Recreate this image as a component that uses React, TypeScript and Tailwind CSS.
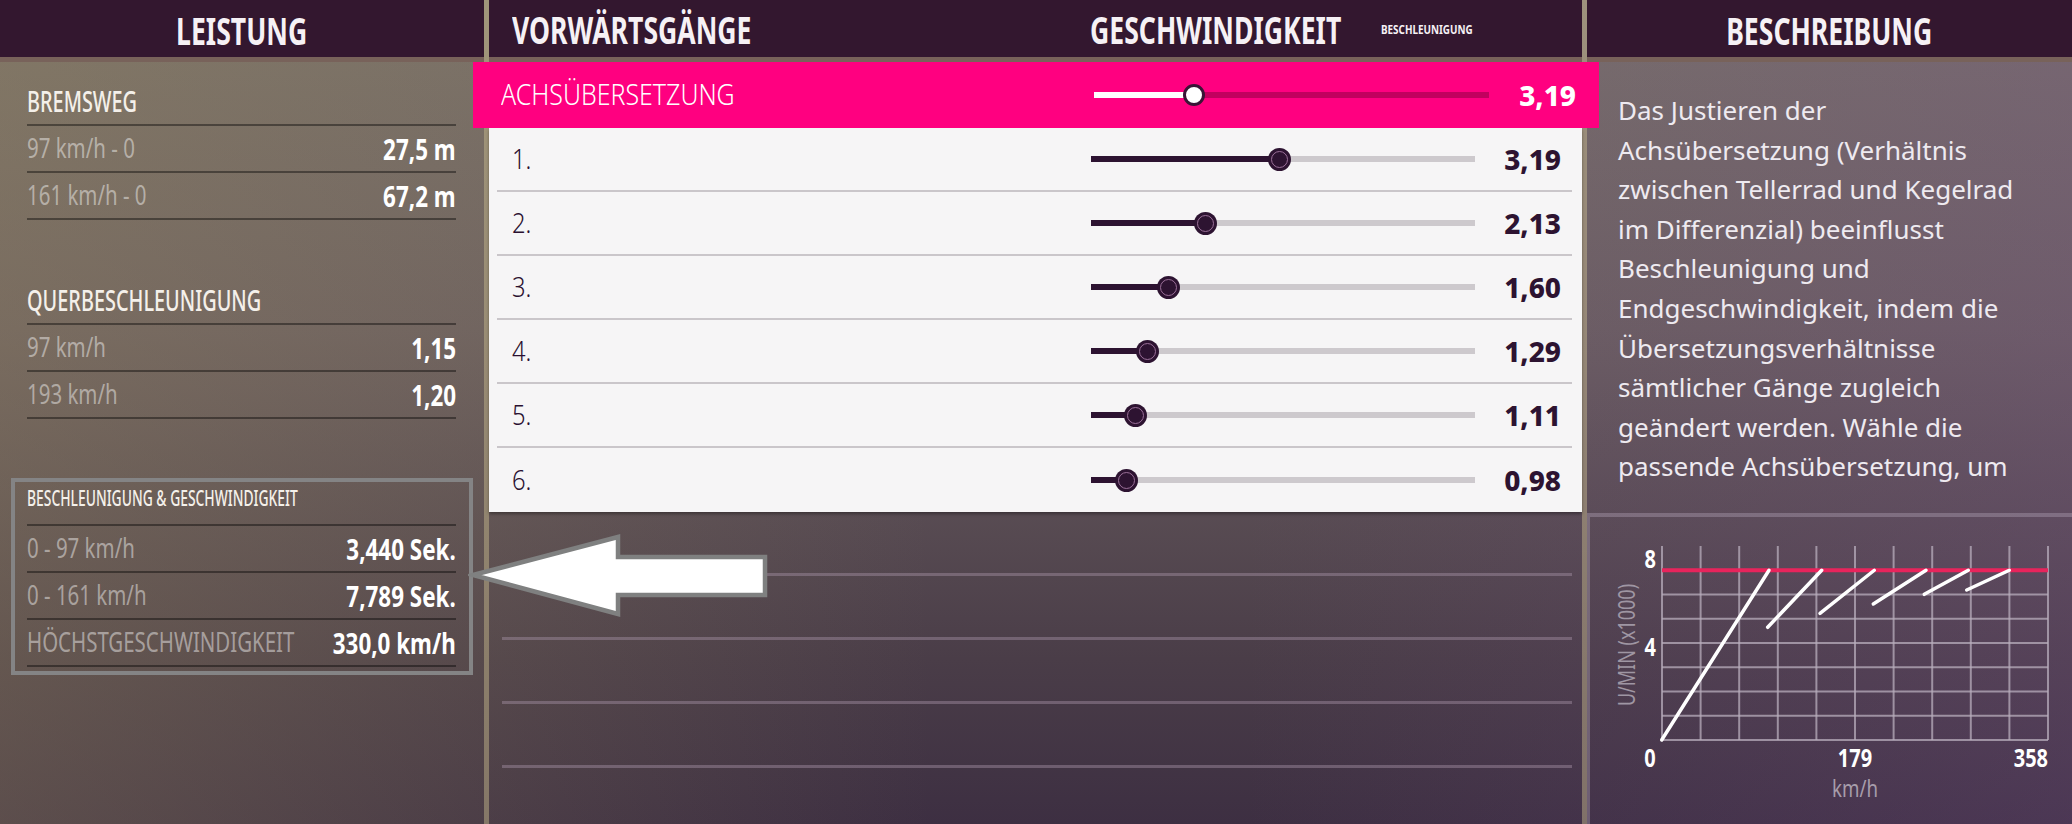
import React from "react";

const cond = "font-['Noto_Sans','Open_Sans',sans-serif]";
const body = "font-['Noto_Sans','Open_Sans',sans-serif]";
const edge = "border-[rgba(205,190,145,0.45)]";

const gears = [
  { n: "1.", v: "3,19", p: 49 },
  { n: "2.", v: "2,13", p: 29.7 },
  { n: "3.", v: "1,60", p: 20 },
  { n: "4.", v: "1,29", p: 14.6 },
  { n: "5.", v: "1,11", p: 11.5 },
  { n: "6.", v: "0,98", p: 9.1 },
];

const description = [
  "Das Justieren der",
  "Achsübersetzung (Verhältnis",
  "zwischen Tellerrad und Kegelrad",
  "im Differenzial) beeinflusst",
  "Beschleunigung und",
  "Endgeschwindigkeit, indem die",
  "Übersetzungsverhältnisse",
  "sämtlicher Gänge zugleich",
  "geändert werden. Wähle die",
  "passende Achsübersetzung, um",
];

function PanelHeader({ children, className = "" }: { children: React.ReactNode; className?: string }) {
  return (
    <div className={`flex h-[62px] shrink-0 items-center border-b-[5px] bg-[#33172f] ${edge} ${className}`}>
      {children}
    </div>
  );
}

function HeaderTitle({ children, align = "origin-center" }: { children: React.ReactNode; align?: string }) {
  return (
    <span
      className={`${cond} ${align} inline-block scale-x-[0.7] whitespace-nowrap pt-[2px] text-[38px] font-bold leading-none text-[#f6f1f5]`}
    >
      {children}
    </span>
  );
}

function StatRow({ label, value }: { label: string; value: string }) {
  return (
    <div className="flex h-[47px] items-center border-b-2 border-black/40">
      <div className="min-w-0 flex-1">
        <span className={`${cond} inline-block origin-left scale-x-[0.73] whitespace-nowrap text-[28px] leading-none text-white/45`}>
          {label}
        </span>
      </div>
      <span
        className={`${cond} inline-block shrink-0 origin-right scale-x-[0.8] whitespace-nowrap text-[28px] font-bold leading-none text-white`}
      >
        {value}
      </span>
    </div>
  );
}

function SectionTitle({ children, h }: { children: React.ReactNode; h: string }) {
  return (
    <div className={`flex ${h} items-end border-b-2 border-black/40 pb-[9px]`}>
      <span className={`${cond} inline-block origin-left scale-x-[0.71] whitespace-nowrap text-[28px] font-medium leading-none text-[#f4f0ea]`}>
        {children}
      </span>
    </div>
  );
}

function LeftPanel() {
  return (
    <div className={`flex w-[489px] shrink-0 flex-col border-r-[5px] ${edge}`}>
      <PanelHeader className="justify-center">
        <HeaderTitle>LEISTUNG</HeaderTitle>
      </PanelHeader>
      <div className="flex flex-col pl-[27px] pr-[28px]">
        <SectionTitle h="h-[64px]">BREMSWEG</SectionTitle>
        <StatRow label="97 km/h - 0" value="27,5 m" />
        <StatRow label="161 km/h - 0" value="67,2 m" />

        <SectionTitle h="h-[105px]">QUERBESCHLEUNIGUNG</SectionTitle>
        <StatRow label="97 km/h" value="1,15" />
        <StatRow label="193 km/h" value="1,20" />

        <div className="-ml-[16px] -mr-[17px] mt-[59px] border-4 border-[#848485] pb-[4px] pl-[12px] pr-[13px]">
          <div className="flex h-[44px] items-end border-b-2 border-black/40 pb-[15px]">
            <span
              className={`${cond} inline-block origin-left scale-x-[0.66] whitespace-nowrap text-[21px] font-medium leading-none text-[#f4f0ea]`}
            >
              BESCHLEUNIGUNG &amp; GESCHWINDIGKEIT
            </span>
          </div>
          <StatRow label="0 - 97 km/h" value="3,440 Sek." />
          <StatRow label="0 - 161 km/h" value="7,789 Sek." />
          <StatRow label="HÖCHSTGESCHWINDIGKEIT" value="330,0 km/h" />
        </div>
      </div>
    </div>
  );
}

function Slider({ p, light }: { p: number; light?: boolean }) {
  return (
    <div className="flex h-[24px] w-full items-center">
      <div className={`h-[6px] ${light ? "bg-white" : "bg-[#2d1331]"}`} style={{ width: `${p}%` }} />
      <div
        className={
          light
            ? "relative z-10 -mx-[11px] h-[22px] w-[22px] shrink-0 rounded-full border-[3px] border-[#3a1536] bg-white"
            : "relative z-10 -mx-[11px] flex h-[23px] w-[23px] shrink-0 items-center justify-center rounded-full bg-[#2d1331]"
        }
      >
        {!light && <div className="h-[17px] w-[17px] rounded-full border border-[#9a6f98]" />}
      </div>
      <div className={`h-[6px] flex-1 ${light ? "bg-[#c2005f]" : "bg-[#cdc9cd]"}`} />
    </div>
  );
}

function MiddlePanel() {
  return (
    <div className={`flex w-[1098px] shrink-0 flex-col border-r-[5px] ${edge}`}>
      <PanelHeader className="pl-[23px]">
        <div className="min-w-0 flex-1">
          <HeaderTitle align="origin-left">VORWÄRTSGÄNGE</HeaderTitle>
        </div>
        <div className="flex w-[492px] shrink-0 items-center">
          <div className="w-[291px] shrink-0">
            <HeaderTitle align="origin-left">GESCHWINDIGKEIT</HeaderTitle>
          </div>
          <span
            className={`${cond} inline-block origin-left scale-x-[0.76] whitespace-nowrap pt-[2px] text-[13px] font-bold leading-none text-[#f6f1f5]`}
          >
            BESCHLEUNIGUNG
          </span>
        </div>
      </PanelHeader>

      <div className="relative z-10 -ml-[16px] -mr-[17px] flex h-[66px] shrink-0 items-center bg-[#ff0080] pl-[28px] pr-[23px]">
        <div className="min-w-0 flex-1">
          <span className={`${cond} inline-block origin-left scale-x-[0.86] whitespace-nowrap text-[29px] font-light leading-none text-white`}>
            ACHSÜBERSETZUNG
          </span>
        </div>
        <div className="w-[395px] shrink-0">
          <Slider p={25.4} light />
        </div>
        <span className={`${body} w-[87px] shrink-0 text-right text-[28px] font-extrabold leading-none text-white`}>3,19</span>
      </div>

      <div className="bg-[#f6f5f6] shadow-[0_2px_3px_rgba(0,0,0,0.35)]">
        {gears.map((g, i) => (
          <div
            key={g.n}
            className={`ml-[8px] mr-[10px] flex h-[64px] items-center pl-[15px] pr-[11px] ${
              i < gears.length - 1 ? "border-b-2 border-[#cac6ca]" : ""
            }`}
          >
            <div className="flex-1">
              <span className={`${cond} inline-block origin-left scale-x-[0.85] text-[28px] font-light leading-none text-[#2a1030]`}>
                {g.n}
              </span>
            </div>
            <div className="w-[384px] shrink-0">
              <Slider p={g.p} />
            </div>
            <span className={`${body} w-[86px] shrink-0 text-right text-[28px] font-extrabold leading-none text-[#2d1331]`}>
              {g.v}
            </span>
          </div>
        ))}
      </div>

      {[0, 1, 2, 3].map((i) => (
        <div key={i} className="ml-[13px] mr-[10px] h-[64px] shrink-0 border-b-[3px] border-[rgba(165,145,165,0.45)]" />
      ))}
    </div>
  );
}

function Chart() {
  const left = 72;
  const right = 458;
  const bottom = 223;
  const step = 24.25;
  const cols = Array.from({ length: 11 }, (_, i) => left + (i * (right - left)) / 10);
  const rows = [0, 1, 2, 3, 4, 5, 6];
  const redY = bottom - 7 * step;
  const gearsLines = [
    [71.7, 223, 179, redY],
    [177.7, 110.3, 231.7, redY],
    [230, 96.3, 284.3, redY],
    [283.3, 87, 336, redY],
    [334.3, 77.3, 378.3, redY],
    [376.7, 73, 419.3, redY],
  ];
  const nums = [
    { t: "8", x: 66, y: 51, a: "end" },
    { t: "4", x: 66, y: 139, a: "end" },
    { t: "0", x: 60, y: 250, a: "middle" },
    { t: "179", x: 265, y: 250, a: "middle" },
    { t: "358", x: right, y: 250, a: "end" },
  ];
  return (
    <svg width="482" height="303" viewBox="0 0 482 303" className="block">
      {cols.map((x) => (
        <line key={x} x1={x} x2={x} y1={bottom - 8 * step} y2={bottom} stroke="#b8aebc" strokeOpacity="0.75" strokeWidth="2" />
      ))}
      {rows.map((r) => (
        <line key={r} x1={left} x2={right} y1={bottom - r * step} y2={bottom - r * step} stroke="#b8aebc" strokeOpacity="0.75" strokeWidth="2" />
      ))}
      <line x1={left} x2={right} y1={redY} y2={redY} stroke="#e8245c" strokeWidth="4" />
      {gearsLines.map(([x1, y1, x2, y2], i) => (
        <line key={i} x1={x1} y1={y1} x2={x2} y2={y2} stroke="#ffffff" strokeWidth="3.5" strokeLinecap="round" />
      ))}
      {nums.map((n) => (
        <text
          key={n.t}
          transform={`translate(${n.x} ${n.y}) scale(0.8 1)`}
          textAnchor={n.a}
          fontSize="25"
          fontWeight="700"
          fill="#ffffff"
          className={cond}
        >
          {n.t}
        </text>
      ))}
      <text transform="translate(265 280) scale(0.78 1)" textAnchor="middle" fontSize="24" fill="#a79dab" className={cond}>
        km/h
      </text>
      <text
        textAnchor="middle"
        fontSize="24"
        fill="#9f96a3"
        className={cond}
        transform="translate(45 128) rotate(-90) scale(0.75 1)"
      >
        U/MIN (x1000)
      </text>
    </svg>
  );
}

function RightPanel() {
  return (
    <div className="flex flex-1 flex-col">
      <PanelHeader className="justify-center">
        <HeaderTitle>BESCHREIBUNG</HeaderTitle>
      </PanelHeader>
      <div className="h-[451px] shrink-0 overflow-hidden pl-[31px] pt-[29px]">
        {description.map((line) => (
          <div key={line} className={`${body} whitespace-nowrap text-[26px] leading-[39.6px] text-[#eeeaf0]`}>
            {line}
          </div>
        ))}
      </div>
      <div className="flex-1 border-l-[3px] border-t-4 border-[rgba(190,175,195,0.35)]">
        <Chart />
      </div>
    </div>
  );
}

function Arrow() {
  return (
    <svg className="absolute left-[468px] top-[532px] z-20" width="302" height="86" viewBox="0 0 302 86">
      <polygon
        points="5,43 150,5 150,25 297,25 297,63 150,63 150,82"
        fill="#ffffff"
        stroke="#7f8080"
        strokeWidth="4.5"
        strokeLinejoin="miter"
      />
    </svg>
  );
}

export default function App() {
  return (
    <div className="relative flex h-[824px] w-[2072px] overflow-hidden bg-[image:linear-gradient(90deg,rgba(150,135,95,0.35),rgba(150,135,95,0)_45%,rgba(120,80,140,0)_60%,rgba(120,80,140,0.25)),linear-gradient(180deg,#78706a_0%,#6a5e60_40%,#4a3d48_80%,#3d2f42_100%)]">
      <LeftPanel />
      <MiddlePanel />
      <RightPanel />
      <Arrow />
    </div>
  );
}
